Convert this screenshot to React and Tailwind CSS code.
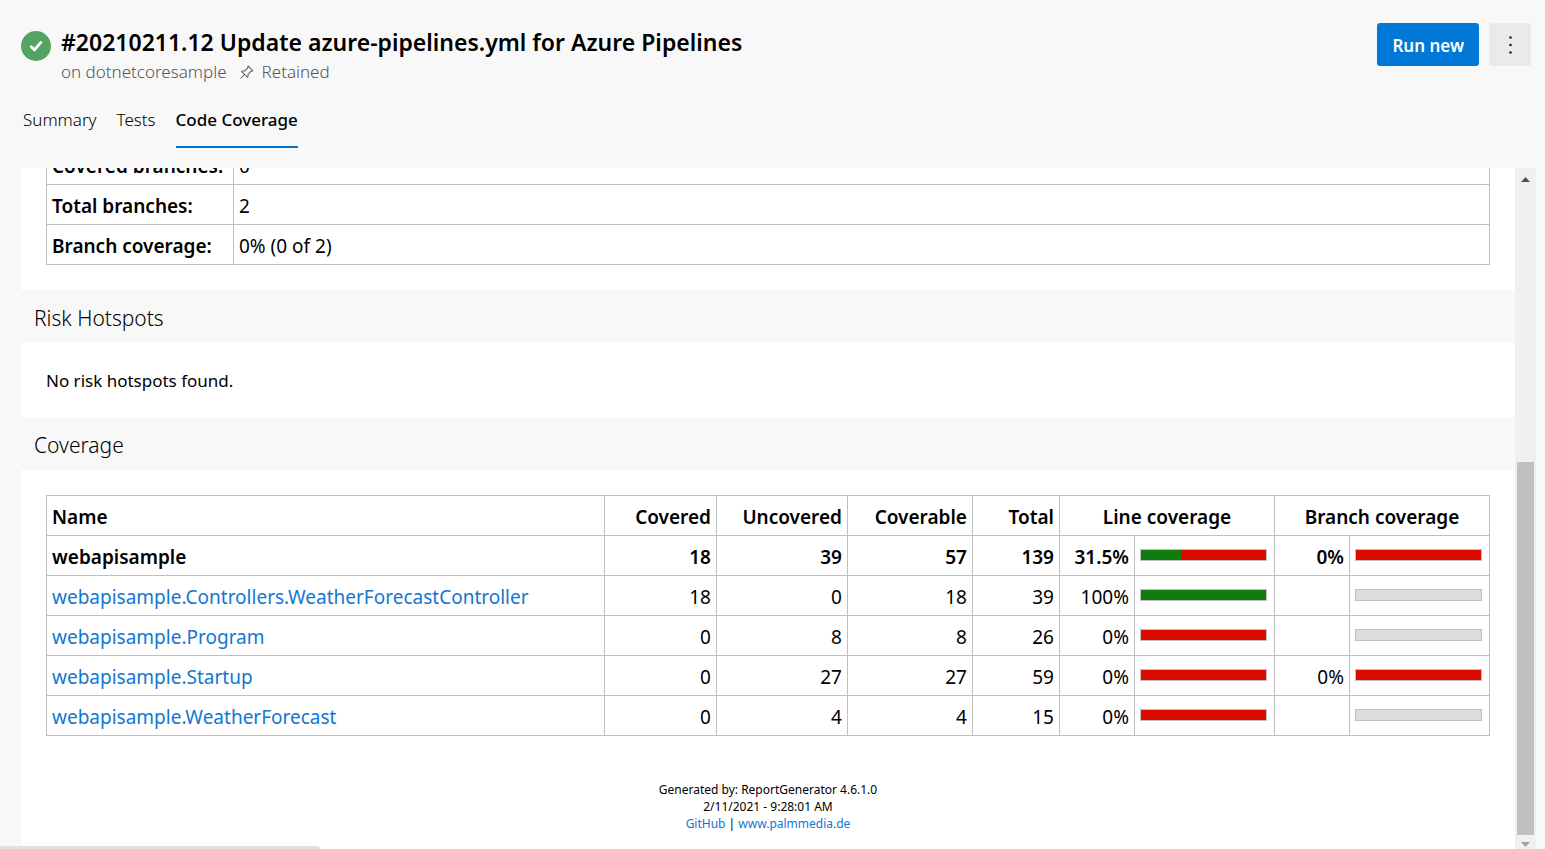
import { BsPinAngle } from "react-icons/bs";

const classes = [
  { name: "webapisample", values: [18, 39, 57, 139], line: 31.5, branch: 0, total: true },
  { name: "webapisample.Controllers.WeatherForecastController", values: [18, 0, 18, 39], line: 100, branch: null },
  { name: "webapisample.Program", values: [0, 8, 8, 26], line: 0, branch: null },
  { name: "webapisample.Startup", values: [0, 27, 27, 59], line: 0, branch: 0 },
  { name: "webapisample.WeatherForecast", values: [0, 4, 4, 15], line: 0, branch: null },
];

const branchSummary = [
  ["Covered branches:", "0"],
  ["Total branches:", "2"],
  ["Branch coverage:", "0% (0 of 2)"],
];

const cell = "h-10 border border-[#c0c0c0] px-[5px] pt-[3px]";
const barCell = "h-10 border border-[#c0c0c0] px-[5px] pb-[2px]";

function Bar({ value }) {
  if (value === null) {
    return <div className="h-3 w-[127px] border border-[#c0c0c0] bg-[#dcdcdc]" />;
  }
  return (
    <div className="flex h-3 w-[127px] border border-[#c0c0c0] bg-[#dc0a00]">
      <div className="bg-[#107c10]" style={{ width: `${Math.ceil(value)}%` }} />
    </div>
  );
}

function SectionTitle({ children }) {
  return (
    <h2 className="flex h-[53px] shrink-0 items-center bg-[#f8f8f8] px-[13px] pt-[2px] text-[21px] leading-7 font-light">
      {children}
    </h2>
  );
}

function Tab({ active, children }) {
  return (
    <a
      href="#"
      aria-current={active ? "page" : undefined}
      className={
        active
          ? "border-b-2 border-[#0078d4] pb-[14px] font-medium"
          : "border-b-2 border-transparent pb-[14px]"
      }
    >
      {children}
    </a>
  );
}

function Header() {
  return (
    <header className="shrink-0">
      <div className="flex items-start pt-[23px] pr-[14px] pl-[21px]">
        <svg viewBox="0 0 30 30" className="mt-2 size-[30px] shrink-0" aria-hidden="true">
          <circle cx="15" cy="15" r="15" fill="#55a362" />
          <path d="M10.300 15.800l3.200 3.100 6.400-7.500" fill="none" stroke="#fff" strokeWidth="2.8" strokeLinecap="round" strokeLinejoin="round" />
        </svg>
        <div className="ml-[10px] flex-1 pt-px">
          <h1 className="text-[23px] leading-9 font-semibold">
            #20210211.12 Update azure-pipelines.yml for Azure Pipelines
          </h1>
          <div className="flex items-center text-[17px] leading-6 font-light text-[#555]">
            <span>on dotnetcoresample</span>
            <BsPinAngle className="mr-2 ml-3 size-[15px]" />
            <span>Retained</span>
          </div>
        </div>
        <button className="h-[43px] rounded-[3px] bg-[#0078d7] px-[15px] pt-[2px] text-[17px] font-semibold text-white">Run new</button>
        <button aria-label="More actions" className="ml-[10px] flex h-[43px] w-[42px] items-center justify-center rounded-[3px] bg-[#eaeaea]">
          <svg viewBox="0 0 3 18" className="h-[18px] w-[3px]" fill="#222">
            <circle cx="1.5" cy="1.5" r="1.3" />
            <circle cx="1.5" cy="9" r="1.3" />
            <circle cx="1.5" cy="16.5" r="1.3" />
          </svg>
        </button>
      </div>
      <nav className="flex gap-5 pt-6 pb-5 pl-[23px] text-[17px] leading-6 font-light text-black">
        <Tab>Summary</Tab>
        <Tab>Tests</Tab>
        <Tab active>Code Coverage</Tab>
      </nav>
    </header>
  );
}

function CoverageTable() {
  return (
    <table className="w-full table-fixed border-collapse text-[19px] leading-6">
      <colgroup>
        <col />
        <col className="w-[112px]" />
        <col className="w-[131px]" />
        <col className="w-[125px]" />
        <col className="w-[87px]" />
        <col className="w-[75px]" />
        <col className="w-[140px]" />
        <col className="w-[75px]" />
        <col className="w-[140px]" />
      </colgroup>
      <thead>
        <tr>
          <th className={`${cell} text-left font-semibold`}>Name</th>
          <th className={`${cell} text-right font-semibold`}>Covered</th>
          <th className={`${cell} text-right font-semibold`}>Uncovered</th>
          <th className={`${cell} text-right font-semibold`}>Coverable</th>
          <th className={`${cell} text-right font-semibold`}>Total</th>
          <th className={`${cell} text-center font-semibold`} colSpan={2}>Line coverage</th>
          <th className={`${cell} text-center font-semibold`} colSpan={2}>Branch coverage</th>
        </tr>
      </thead>
      <tbody>
        {classes.map((c) => (
          <tr key={c.name} className={c.total ? "font-semibold" : ""}>
            <td className={cell}>
              {c.total ? c.name : <a href="#" className="text-[#1276d3]">{c.name}</a>}
            </td>
            {c.values.map((v, i) => (
              <td key={i} className={`${cell} text-right`}>{v}</td>
            ))}
            <td className={`${cell} text-right`}>{c.line}%</td>
            <td className={barCell}><Bar value={c.line} /></td>
            <td className={`${cell} text-right`}>{c.branch === null ? "" : `${c.branch}%`}</td>
            <td className={barCell}><Bar value={c.branch} /></td>
          </tr>
        ))}
      </tbody>
    </table>
  );
}

function Scrollbar() {
  return (
    <div className="flex w-[21px] shrink-0 flex-col items-center bg-[#f0f0f0] pt-[9px] pb-[2px]" aria-hidden="true">
      <svg viewBox="0 0 9 5" className="h-[5px] w-[9px]" fill="#505050"><path d="M0 5L4.500 0L9 5z" /></svg>
      <div className="flex-1" />
      <div className="h-[373px] w-[17px] bg-[#c0c0c0]" />
      <svg viewBox="0 0 9 5" className="mt-[7px] h-[5px] w-[9px]" fill="#a0a0a0"><path d="M0 0h9L4.500 5z" /></svg>
    </div>
  );
}

export default function App() {
  return (
    <div className="relative flex h-screen flex-col overflow-hidden bg-[#f8f8f8] font-['Noto_Sans','Open_Sans',sans-serif] text-black">
      <Header />
      <div className="flex min-h-0 flex-1 pr-[9px] pl-[21px]">
        <main className="flex flex-1 flex-col justify-end overflow-hidden bg-white">
          <div className="shrink-0 px-[25px] pb-[25px]">
            <table className="w-full border-collapse text-[19px] leading-6">
              <tbody>
                {branchSummary.map(([label, value]) => (
                  <tr key={label}>
                    <th className={`${cell} w-[187px] text-left font-semibold`}>{label}</th>
                    <td className={cell}>{value}</td>
                  </tr>
                ))}
              </tbody>
            </table>
          </div>
          <SectionTitle>Risk Hotspots</SectionTitle>
          <p className="shrink-0 px-[25px] pt-[26px] pb-6 text-[17px] leading-6">No risk hotspots found.</p>
          <SectionTitle>Coverage</SectionTitle>
          <div className="shrink-0 px-[25px] pt-[25px]">
            <CoverageTable />
          </div>
          <footer className="shrink-0 pt-[45px] pb-[17px] text-center text-[12px] leading-[17px]">
            <p>Generated by: ReportGenerator 4.6.1.0</p>
            <p>2/11/2021 - 9:28:01 AM</p>
            <p>
              <a href="#" className="text-[#1276d3]">GitHub</a> | <a href="#" className="text-[#1276d3]">www.palmmedia.de</a>
            </p>
          </footer>
        </main>
        <Scrollbar />
      </div>
      <div className="absolute bottom-0 left-0 h-[3px] w-80 rounded-tr bg-[#dfe1e5]" />
    </div>
  );
}
